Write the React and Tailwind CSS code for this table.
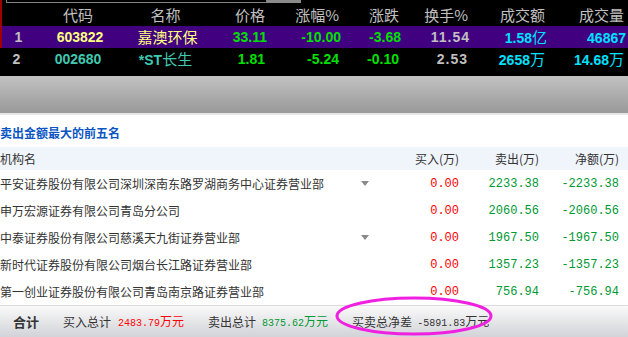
import React from "react";

const CJK = "font-['Noto_Sans_CJK_SC','Noto_Sans',sans-serif]";
const NUM = "font-['Liberation_Sans','Noto_Sans_CJK_SC',sans-serif] font-bold";
const MONO = "font-['Liberation_Mono','Noto_Sans_CJK_SC',monospace]";

const quotes = [
    {
        idx: "1",
        code: "603822",
        name: "嘉澳环保",
        price: "33.11",
        pct: "-10.00",
        chg: "-3.68",
        turn: "11.54",
        amt: "1.58",
        amtU: "亿",
        vol: "46867",
        volU: "",
        bg: "bg-[#400080]",
        codeC: "text-[#ffff80]",
        nameC: "text-[#ffff80]",
    },
    {
        idx: "2",
        code: "002680",
        name: "*ST长生",
        price: "1.81",
        pct: "-5.24",
        chg: "-0.10",
        turn: "2.53",
        amt: "2658",
        amtU: "万",
        vol: "14.68",
        volU: "万",
        bg: "",
        codeC: "text-[#40c8b0]",
        nameC: "text-[#40c8b0]",
    },
];

const sellers = [
    { name: "平安证券股份有限公司深圳深南东路罗湖商务中心证券营业部", arrow: true, buy: "0.00", sell: "2233.38", net: "-2233.38" },
    { name: "申万宏源证券有限公司青岛分公司", arrow: false, buy: "0.00", sell: "2060.56", net: "-2060.56" },
    { name: "中泰证券股份有限公司慈溪天九街证券营业部", arrow: true, buy: "0.00", sell: "1967.50", net: "-1967.50" },
    { name: "新时代证券股份有限公司烟台长江路证券营业部", arrow: false, buy: "0.00", sell: "1357.23", net: "-1357.23" },
    { name: "第一创业证券股份有限公司青岛南京路证券营业部", arrow: false, buy: "0.00", sell: "756.94", net: "-756.94" },
];

const QuoteRow = ({ q }) => (
    <div className={`flex items-center h-[22px] leading-[18px] ${q.bg}`}>
        <span className={`w-[33px] text-center text-[14px] text-[#c0c0c0] ${NUM}`}>{q.idx}</span>
        <span className={`w-[90px] text-center text-[14px] ${q.codeC} ${NUM}`}>{q.code}</span>
        <span className={`w-[85px] text-center text-[15px] ${q.nameC} ${CJK}`}>
            {q.name.startsWith("*ST") ? (
                <>
                    <span className={`text-[14px] ${NUM}`}>*ST</span>
                    {q.name.slice(3)}
                </>
            ) : (
                q.name
            )}
        </span>
        <span className={`w-[57px] text-right text-[14px] text-[#00e000] ${NUM}`}>{q.price}</span>
        <span className={`w-[74px] text-right text-[14px] text-[#00e000] ${NUM}`}>{q.pct}</span>
        <span className={`w-[60px] text-right text-[14px] text-[#00e000] ${NUM}`}>{q.chg}</span>
        <span className={`w-[69px] text-right text-[14px] tracking-[1px] text-[#c0c0c0] ${NUM}`}>{q.turn}</span>
        <span className={`w-[77px] text-right text-[14px] text-[#00e0ff] ${NUM}`}>
            {q.amt}
            <span className={`text-[15px] font-normal ${CJK}`}>{q.amtU}</span>
        </span>
        <span className={`w-[79px] text-right text-[14px] text-[#00e0ff] ${NUM}`}>
            {q.vol}
            <span className={`text-[15px] font-normal ${CJK}`}>{q.volU}</span>
        </span>
    </div>
);

export default function App() {
    return (
        <div className={`relative w-[628px] h-[337px] overflow-hidden bg-white ${CJK}`}>
            {/* 行情区 */}
            <div className="bg-black h-[76px] flex flex-col">
                <div className="border-l-2 border-[#a00000]">
                    <div className="flex h-[3px]">
                        <div className="ml-[4px] w-[261px] border border-t-0 border-[#808080]" />
                        <div className="w-[34px] bg-[#8a8a8a]" />
                    </div>
                    <div className="flex items-center h-[23px] text-[15px] leading-[18px] text-[#c0c0c0] -ml-[2px]">
                        <span className="w-[33px]" />
                        <span className="w-[90px] text-center">代码</span>
                        <span className="w-[85px] text-center">名称</span>
                        <span className="w-[57px] text-right">价格</span>
                        <span className="w-[74px] text-right">涨幅%</span>
                        <span className="w-[60px] text-right">涨跌</span>
                        <span className="w-[69px] text-right">换手%</span>
                        <span className="w-[77px] text-right">成交额</span>
                        <span className="w-[79px] text-right">成交量</span>
                    </div>
                    <div className="-ml-[2px] pl-[2px]">
                        <QuoteRow q={quotes[0]} />
                    </div>
                </div>
                <QuoteRow q={quotes[1]} />
            </div>

            {/* 分隔条 */}
            <div className="h-[37px] bg-gradient-to-b from-[#c2c2c2] to-[#999999]" />
            <div className="h-[2px] bg-[#e6e6e6]" />

            {/* 卖出前五 */}
            <div className="h-[32px] flex items-center pt-[3px]">
                <span className="text-[12px] font-bold text-[#0a55c4]">卖出金额最大的前五名</span>
            </div>
            <div className="flex items-center h-[23px] bg-[#f0f5fc] text-[12px] text-[#333]">
                <span className="w-[350px]">机构名</span>
                <span className="w-[30px]" />
                <span className="w-[79px] text-right">买入(万)</span>
                <span className="w-[80px] text-right">卖出(万)</span>
                <span className="w-[80px] text-right">净额(万)</span>
            </div>
            {sellers.map((s) => (
                <div key={s.name} className="flex items-center h-[27px]">
                    <span className="w-[350px] text-[12px] text-[#333] whitespace-nowrap">{s.name}</span>
                    <span className="w-[30px] flex justify-center">
                        {s.arrow && (
                            <svg width="8" height="5" viewBox="0 0 8 5">
                                <path d="M0 0h8L4 5z" fill="#8a8a8a" />
                            </svg>
                        )}
                    </span>
                    <span className={`w-[79px] text-right text-[12px] text-[#ff0000] ${MONO}`}>{s.buy}</span>
                    <span className={`w-[80px] text-right text-[12px] text-[#009933] ${MONO}`}>{s.sell}</span>
                    <span className={`w-[80px] text-right text-[12px] text-[#009933] ${MONO}`}>{s.net}</span>
                </div>
            ))}

            {/* 合计 */}
            <div className="flex items-center h-[32px] border-t border-[#dcdcdc] bg-gradient-to-b from-[#fafafa] to-[#d2d3d8] text-[12px] text-[#333] whitespace-nowrap">
                <span className="ml-[13px] text-[13px] font-bold">合计</span>
                <span className="ml-[24px]">买入总计</span>
                <span className="ml-[7px] text-[#ff0000]">
                    <span className={`text-[10px] ${MONO}`}>2483.79</span>万元
                </span>
                <span className="ml-[24px]">卖出总计</span>
                <span className="ml-[6px] text-[#009933]">
                    <span className={`text-[10px] ${MONO}`}>8375.62</span>万元
                </span>
                <span className="ml-[24px]">买卖总净差</span>
                <span className="ml-[5px]">
                    <span className={`text-[10px] ${MONO}`}>-5891.83</span>万元
                </span>
            </div>

            {/* 标注圈 */}
            <svg className="absolute left-[334px] top-[296px]" width="160" height="42" viewBox="0 0 160 42">
                <ellipse cx="80" cy="20" rx="77" ry="18" fill="none" stroke="#f020e0" strokeWidth="3" />
            </svg>
        </div>
    );
}
